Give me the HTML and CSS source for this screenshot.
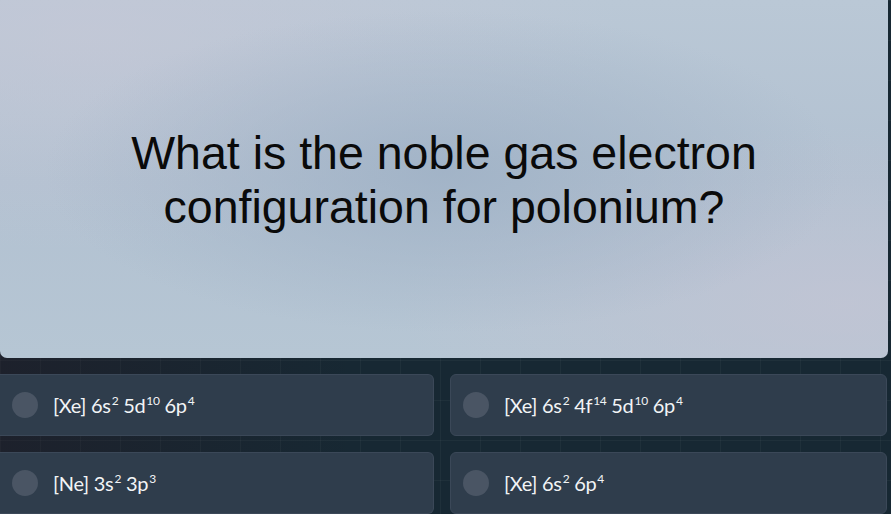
FILE: index.html
```html
<!DOCTYPE html>
<html>
<head>
<meta charset="utf-8">
<link rel="stylesheet" href="styles.css">
</head>
<body>
<div class="page">
  <div class="question">
    <p class="qtext">What is the noble gas electron<br>configuration for polonium?</p>
  </div>
  <div class="options">
    <div class="option"><span class="radio"></span><span class="label">[Xe] 6s<sup>2</sup> 5d<sup>10</sup> 6p<sup>4</sup></span></div>
    <div class="option"><span class="radio"></span><span class="label">[Xe] 6s<sup>2</sup> 4f<sup>14</sup> 5d<sup>10</sup> 6p<sup>4</sup></span></div>
    <div class="option"><span class="radio"></span><span class="label">[Ne] 3s<sup>2</sup> 3p<sup>3</sup></span></div>
    <div class="option"><span class="radio"></span><span class="label">[Xe] 6s<sup>2</sup> 6p<sup>4</sup></span></div>
  </div>
</div>
</body>
</html>
```
FILE: styles.css
```css
html, body {
  margin: 0;
  padding: 0;
  height: 100%;
  overflow: hidden;
}
body {
  background-color: #172833;
  background-image:
    linear-gradient(90deg, rgba(40,20,30,0.35) 0%, rgba(0,0,0,0) 40%),
    linear-gradient(rgba(255,255,255,0.035) 1px, transparent 1px),
    linear-gradient(90deg, rgba(255,255,255,0.035) 1px, transparent 1px);
  background-size: 100% 100%, 40px 40px, 40px 40px;
  font-family: "Lato", "Liberation Sans", sans-serif;
}
.page {
  width: 888px;
}
.question {
  height: 358px;
  border-radius: 0 0 7px 7px;
  background:
    radial-gradient(ellipse 45% 45% at 50% 48%, rgba(160,178,198,0.9) 0%, rgba(160,178,198,0) 100%),
    radial-gradient(ellipse 60% 60% at 10% 10%, rgba(200,200,215,0.6) 0%, rgba(200,200,215,0) 100%),
    radial-gradient(ellipse 50% 50% at 95% 85%, rgba(196,196,212,0.7) 0%, rgba(196,196,212,0) 100%),
    linear-gradient(180deg, #bac8d6 0%, #b2c1d1 50%, #b6c6d4 100%);
  display: flex;
  align-items: center;
  justify-content: center;
}
.qtext {
  margin: 0;
  padding-top: 2px;
  font-family: "Liberation Sans", Arial, sans-serif;
  font-size: 46.5px;
  line-height: 54px;
  color: #0a0a0a;
  text-align: center;
}
.options {
  display: grid;
  grid-template-columns: 434px 437px;
  column-gap: 16px;
  row-gap: 16px;
  margin-top: 16px;
}
.option {
  height: 62px;
  box-sizing: border-box;
  background: #2f3d4c;
  border: 1px solid #3b4858;
  border-radius: 6px;
  display: flex;
  align-items: center;
  padding-left: 12px;
}
.option:nth-child(odd) {
  border-left: none;
  border-radius: 0 6px 6px 0;
}
.radio {
  width: 26px;
  height: 26px;
  border-radius: 50%;
  background: #4a5564;
  flex: none;
}
.label {
  margin-left: 15px;
  color: #f2f4f6;
  font-size: 20px;
  letter-spacing: -0.3px;
}
.label sup {
  font-size: 12px;
  vertical-align: 0;
  position: relative;
  top: -8px;
  margin-left: 1px;
}
```
